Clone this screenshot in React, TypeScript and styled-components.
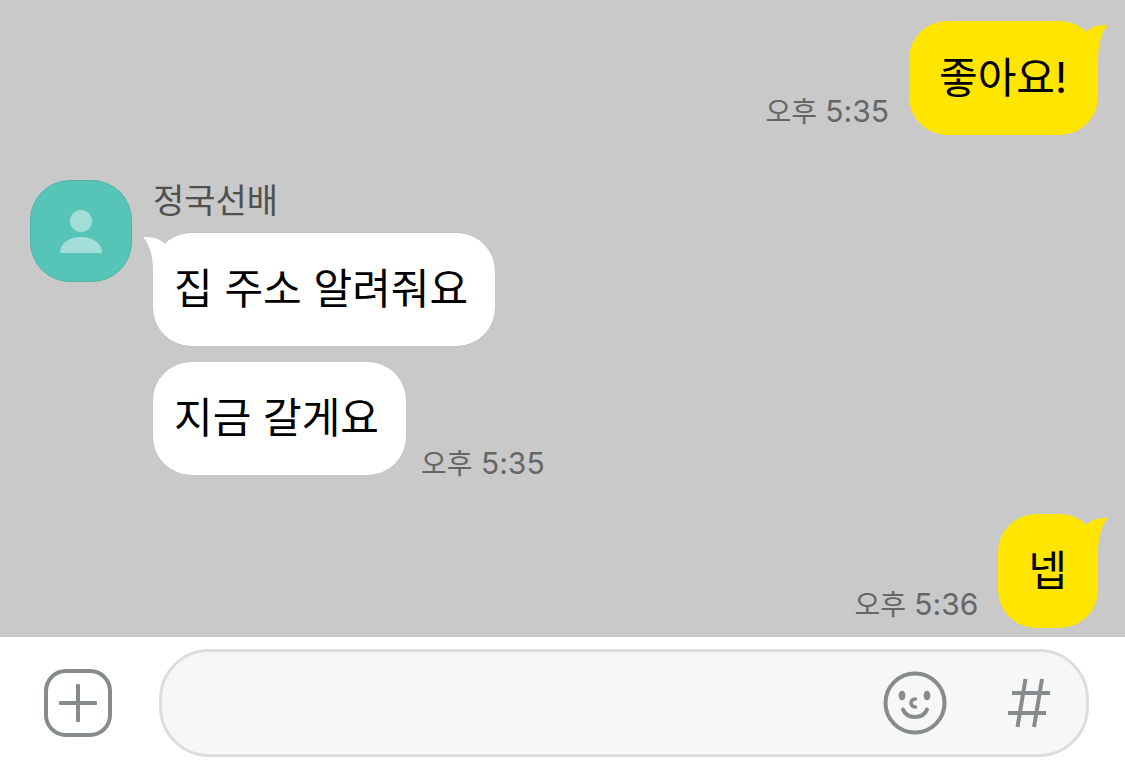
import React from "react";
import styled, { createGlobalStyle, css } from "styled-components";

const GlobalStyle = createGlobalStyle`
  * { box-sizing: border-box; }
  body {
    margin: 0;
    background: #ffffff;
    font-family: Inter, "Noto Sans CJK KR", sans-serif;
  }
`;

const Screen = styled.div`
  display: flex;
  flex-direction: column;
  min-height: 100vh;
`;

const Chat = styled.main`
  flex: 1;
  display: flex;
  flex-direction: column;
  gap: 39px;
  padding: 21px 27px 9px 30px;
  background: #c9c9c9;
`;

const SentRow = styled.div`
  display: flex;
  justify-content: flex-end;
  align-items: flex-end;
  gap: 20px;
`;

const ReceivedGroup = styled.div`
  display: flex;
  align-items: flex-start;
  gap: 21px;
  padding-top: 6px;
`;

const Avatar = styled.div`
  flex: none;
  display: flex;
  width: 102px;
  height: 102px;
  border: 1px solid #4fb3a6;
  border-radius: 40px;
  background: #57c4b8;
`;

const Body = styled.div`
  display: flex;
  flex-direction: column;
  align-items: flex-start;
`;

const Name = styled.div`
  height: 53px;
  font-size: 34px;
  line-height: 42px;
  color: #505050;
`;

const Bubbles = styled.div`
  display: flex;
  flex-direction: column;
  gap: 16px;
`;

const ReceivedRow = styled.div`
  display: flex;
  align-items: flex-end;
  gap: 15px;
`;

const Bubble = styled.div<{ $mine?: boolean }>`
  position: relative;
  border-radius: 38px;
  font-size: 42px;
  line-height: 57px;
  color: #000000;
  white-space: nowrap;
  ${({ $mine }) =>
    $mine
      ? css`
          padding: 28px 31px 29px 30px;
          background: #ffe500;
        `
      : css`
          padding: 27px 27px 29px 21px;
          background: #ffffff;
          box-shadow: 0 0 1px #a8a8a8;
        `}
`;

const TailShape = styled.svg<{ $mine?: boolean }>`
  position: absolute;
  top: 0;
  width: 28px;
  height: 40px;
  ${({ $mine }) => ($mine ? "right: -10px;" : "left: -10px; transform: scaleX(-1);")}
`;

const Time = styled.time<{ $mine?: boolean }>`
  margin-bottom: ${({ $mine }) => ($mine ? 11 : -1)}px;
  font-size: 30px;
  line-height: 24px;
  color: #666666;
  white-space: nowrap;
`;

const Meridiem = styled.span`
  font-size: 28px;
`;

const InputBar = styled.form`
  display: flex;
  align-items: center;
  gap: 47px;
  padding: 12px 36px 5px 44px;
  background: #ffffff;
`;

const AddButton = styled.button`
  flex: none;
  display: flex;
  align-items: center;
  justify-content: center;
  width: 68px;
  height: 68px;
  padding: 0;
  border: 4px solid #868b8d;
  border-radius: 22px;
  background: #ffffff;
`;

const Field = styled.div`
  flex: 1;
  min-width: 0;
  display: flex;
  align-items: center;
  gap: 60px;
  height: 108px;
  padding: 0 35px 0 40px;
  border: 3px solid #dddddd;
  border-radius: 50px;
  background: #f7f7f7;
`;

const TextInput = styled.input`
  flex: 1;
  min-width: 0;
  height: 60px;
  padding: 0;
  border: 0;
  outline: 0;
  background: transparent;
  font: inherit;
  font-size: 42px;
`;

const IconButton = styled.button`
  flex: none;
  display: flex;
  padding: 0;
  border: 0;
  background: transparent;
  color: #868b8d;
`;

const Tail = ({ mine }: { mine?: boolean }) => (
  <TailShape $mine={mine} viewBox="0 0 28 40" aria-hidden="true">
    <path
      d="M6 11Q14 3 26.500 4Q27.500 4.200 27 5C21 13 18 23 18 38L6 38Z"
      fill={mine ? "#ffe500" : "#ffffff"}
    />
  </TailShape>
);

const Stamp = ({ time, mine }: { time: string; mine?: boolean }) => (
  <Time $mine={mine}>
    <Meridiem>오후</Meridiem> {time}
  </Time>
);

const Sent = ({ text, time }: { text: string; time: string }) => (
  <SentRow>
    <Stamp time={time} mine />
    <Bubble $mine>
      <Tail mine />
      {text}
    </Bubble>
  </SentRow>
);

export default function App() {
  return (
    <Screen>
      <GlobalStyle />
      <Chat>
        <Sent text="좋아요!" time="5:35" />
        <ReceivedGroup>
          <Avatar>
            <svg width="100" height="100" viewBox="0 0 100 100" aria-hidden="true">
              <g fill="#a3dfd8">
                <circle cx="50" cy="40" r="11" />
                <path d="M29 72C29 62 38 56 50 56S71 62 71 72Z" />
              </g>
            </svg>
          </Avatar>
          <Body>
            <Name>정국선배</Name>
            <Bubbles>
              <ReceivedRow>
                <Bubble>
                  <Tail />집 주소 알려줘요
                </Bubble>
              </ReceivedRow>
              <ReceivedRow>
                <Bubble>지금 갈게요</Bubble>
                <Stamp time="5:35" />
              </ReceivedRow>
            </Bubbles>
          </Body>
        </ReceivedGroup>
        <Sent text="넵" time="5:36" />
      </Chat>
      <InputBar onSubmit={(e) => e.preventDefault()}>
        <AddButton type="button" aria-label="추가">
          <svg width="38" height="38" viewBox="0 0 38 38" fill="#868b8d">
            <rect x="17" y="0" width="4" height="38" rx="1" />
            <rect x="0" y="17" width="38" height="4" rx="1" />
          </svg>
        </AddButton>
        <Field>
          <TextInput type="text" aria-label="메시지 입력" />
          <IconButton type="button" aria-label="이모티콘">
            <svg
              width="64"
              height="64"
              viewBox="0 0 64 64"
              fill="none"
              stroke="currentColor"
              strokeWidth="4"
              strokeLinecap="round"
            >
              <circle cx="32" cy="32" r="29.500" />
              <ellipse cx="19" cy="24.500" rx="3.400" ry="4.800" fill="currentColor" stroke="none" />
              <ellipse cx="44" cy="24.500" rx="3.400" ry="4.800" fill="currentColor" stroke="none" />
              <path d="M32.500 28C26.500 28.500 26.500 35.500 32.500 36" strokeWidth="3.500" />
              <path d="M20 38.500C24 48.500 40 48.500 44 38.500" />
            </svg>
          </IconButton>
          <IconButton type="button" aria-label="샵검색">
            <svg
              width="44"
              height="50"
              viewBox="0 0 44 50"
              fill="none"
              stroke="currentColor"
              strokeWidth="4"
            >
              <path d="M18.500 1L10.500 49M35 1L27 49M5 15H43M1 35H39" />
            </svg>
          </IconButton>
        </Field>
      </InputBar>
    </Screen>
  );
}
